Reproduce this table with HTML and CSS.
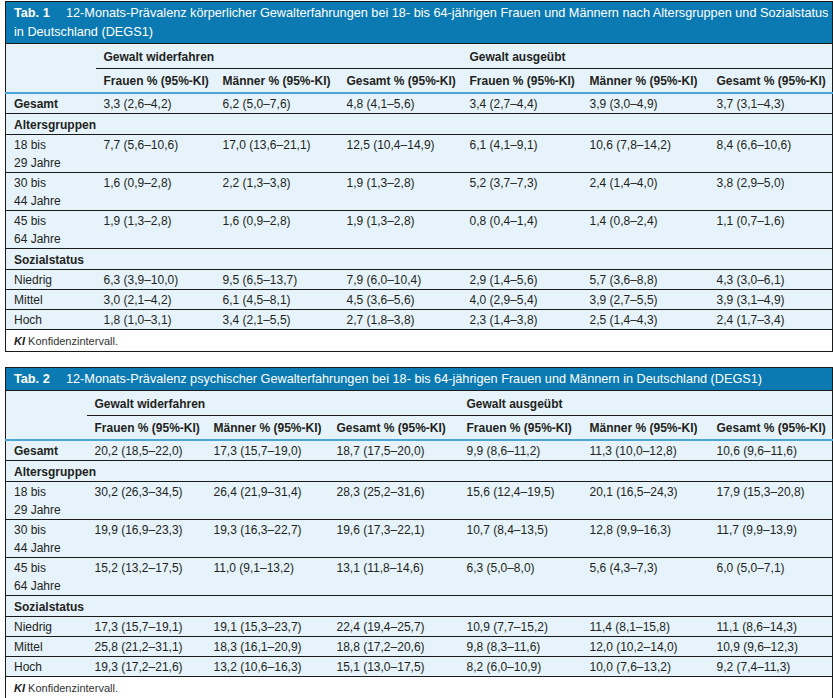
FILE: index.html
```html
<!DOCTYPE html>
<html lang="de">
<head>
<meta charset="utf-8">
<link rel="stylesheet" href="styles.css">
<title>DEGS1 Tabellen</title>
</head>
<body>
<div class="page">
  <table class="tab t1">
    <colgroup>
      <col class="c1"><col class="c2"><col class="c3"><col class="c4"><col class="c5"><col class="c6"><col class="c7">
    </colgroup>
    <thead>
      <tr>
        <th class="title" colspan="7"><span class="tabno">Tab. 1</span>12-Monats-Prävalenz körperlicher Gewalterfahrungen bei 18- bis 64-jährigen Frauen und Männern nach Altersgruppen und Sozialstatus<br>in Deutschland (DEGS1)</th>
      </tr>
      <tr class="grp">
        <th class="stub" rowspan="2"></th>
        <th colspan="3">Gewalt widerfahren</th>
        <th colspan="3">Gewalt ausgeübt</th>
      </tr>
      <tr class="cols">
        <th>Frauen % (95%-KI)</th><th>Männer % (95%-KI)</th><th>Gesamt % (95%-KI)</th>
        <th>Frauen % (95%-KI)</th><th>Männer % (95%-KI)</th><th>Gesamt % (95%-KI)</th>
      </tr>
    </thead>
    <tbody>
      <tr><th class="lbl">Gesamt</th><td>3,3 (2,6–4,2)</td><td>6,2 (5,0–7,6)</td><td>4,8 (4,1–5,6)</td><td>3,4 (2,7–4,4)</td><td>3,9 (3,0–4,9)</td><td>3,7 (3,1–4,3)</td></tr>
      <tr class="sec"><th class="lbl" colspan="7">Altersgruppen</th></tr>
      <tr><td class="rl">18 bis<br>29 Jahre</td><td>7,7 (5,6–10,6)</td><td>17,0 (13,6–21,1)</td><td>12,5 (10,4–14,9)</td><td>6,1 (4,1–9,1)</td><td>10,6 (7,8–14,2)</td><td>8,4 (6,6–10,6)</td></tr>
      <tr><td class="rl">30 bis<br>44 Jahre</td><td>1,6 (0,9–2,8)</td><td>2,2 (1,3–3,8)</td><td>1,9 (1,3–2,8)</td><td>5,2 (3,7–7,3)</td><td>2,4 (1,4–4,0)</td><td>3,8 (2,9–5,0)</td></tr>
      <tr><td class="rl">45 bis<br>64 Jahre</td><td>1,9 (1,3–2,8)</td><td>1,6 (0,9–2,8)</td><td>1,9 (1,3–2,8)</td><td>0,8 (0,4–1,4)</td><td>1,4 (0,8–2,4)</td><td>1,1 (0,7–1,6)</td></tr>
      <tr class="sec"><th class="lbl" colspan="7">Sozialstatus</th></tr>
      <tr><td class="rl">Niedrig</td><td>6,3 (3,9–10,0)</td><td>9,5 (6,5–13,7)</td><td>7,9 (6,0–10,4)</td><td>2,9 (1,4–5,6)</td><td>5,7 (3,6–8,8)</td><td>4,3 (3,0–6,1)</td></tr>
      <tr><td class="rl">Mittel</td><td>3,0 (2,1–4,2)</td><td>6,1 (4,5–8,1)</td><td>4,5 (3,6–5,6)</td><td>4,0 (2,9–5,4)</td><td>3,9 (2,7–5,5)</td><td>3,9 (3,1–4,9)</td></tr>
      <tr><td class="rl">Hoch</td><td>1,8 (1,0–3,1)</td><td>3,4 (2,1–5,5)</td><td>2,7 (1,8–3,8)</td><td>2,3 (1,4–3,8)</td><td>2,5 (1,4–4,3)</td><td>2,4 (1,7–3,4)</td></tr>
    </tbody>
    <tfoot>
      <tr><td class="note" colspan="7"><b><i>KI</i></b> Konfidenzintervall.</td></tr>
    </tfoot>
  </table>

  <table class="tab t2">
    <colgroup>
      <col class="c1"><col class="c2"><col class="c3"><col class="c4"><col class="c5"><col class="c6"><col class="c7">
    </colgroup>
    <thead>
      <tr>
        <th class="title" colspan="7"><span class="tabno">Tab. 2</span>12-Monats-Prävalenz psychischer Gewalterfahrungen bei 18- bis 64-jährigen Frauen und Männern in Deutschland (DEGS1)</th>
      </tr>
      <tr class="grp">
        <th class="stub" rowspan="2"></th>
        <th colspan="3">Gewalt widerfahren</th>
        <th colspan="3">Gewalt ausgeübt</th>
      </tr>
      <tr class="cols">
        <th>Frauen % (95%-KI)</th><th>Männer % (95%-KI)</th><th>Gesamt % (95%-KI)</th>
        <th>Frauen % (95%-KI)</th><th>Männer % (95%-KI)</th><th>Gesamt % (95%-KI)</th>
      </tr>
    </thead>
    <tbody>
      <tr><th class="lbl">Gesamt</th><td>20,2 (18,5–22,0)</td><td>17,3 (15,7–19,0)</td><td>18,7 (17,5–20,0)</td><td>9,9 (8,6–11,2)</td><td>11,3 (10,0–12,8)</td><td>10,6 (9,6–11,6)</td></tr>
      <tr class="sec"><th class="lbl" colspan="7">Altersgruppen</th></tr>
      <tr><td class="rl">18 bis<br>29 Jahre</td><td>30,2 (26,3–34,5)</td><td>26,4 (21,9–31,4)</td><td>28,3 (25,2–31,6)</td><td>15,6 (12,4–19,5)</td><td>20,1 (16,5–24,3)</td><td>17,9 (15,3–20,8)</td></tr>
      <tr><td class="rl">30 bis<br>44 Jahre</td><td>19,9 (16,9–23,3)</td><td>19,3 (16,3–22,7)</td><td>19,6 (17,3–22,1)</td><td>10,7 (8,4–13,5)</td><td>12,8 (9,9–16,3)</td><td>11,7 (9,9–13,9)</td></tr>
      <tr><td class="rl">45 bis<br>64 Jahre</td><td>15,2 (13,2–17,5)</td><td>11,0 (9,1–13,2)</td><td>13,1 (11,8–14,6)</td><td>6,3 (5,0–8,0)</td><td>5,6 (4,3–7,3)</td><td>6,0 (5,0–7,1)</td></tr>
      <tr class="sec"><th class="lbl" colspan="7">Sozialstatus</th></tr>
      <tr><td class="rl">Niedrig</td><td>17,3 (15,7–19,1)</td><td>19,1 (15,3–23,7)</td><td>22,4 (19,4–25,7)</td><td>10,9 (7,7–15,2)</td><td>11,4 (8,1–15,8)</td><td>11,1 (8,6–14,3)</td></tr>
      <tr><td class="rl">Mittel</td><td>25,8 (21,2–31,1)</td><td>18,3 (16,1–20,9)</td><td>18,8 (17,2–20,6)</td><td>9,8 (8,3–11,6)</td><td>12,0 (10,2–14,0)</td><td>10,9 (9,6–12,3)</td></tr>
      <tr><td class="rl">Hoch</td><td>19,3 (17,2–21,6)</td><td>13,2 (10,6–16,3)</td><td>15,1 (13,0–17,5)</td><td>8,2 (6,0–10,9)</td><td>10,0 (7,6–13,2)</td><td>9,2 (7,4–11,3)</td></tr>
    </tbody>
    <tfoot>
      <tr><td class="note" colspan="7"><b><i>KI</i></b> Konfidenzintervall.</td></tr>
    </tfoot>
  </table>
</div>
</body>
</html>
```

FILE: styles.css
```css
html, body {
  margin: 0;
  padding: 0;
  background: #ffffff;
}

.page {
  padding: 1px 1px 0 5px;
  font-family: "Liberation Sans", Arial, sans-serif;
  color: #231f20;
}

.tab {
  width: 827px;
  table-layout: fixed;
  border-collapse: collapse;
  border: 1px solid #1a1a1a;
  background: #e6f3fb;
  font-size: 12px;
  line-height: 18px;
}

.t2 {
  margin-top: 15px;
}

.t1 .c1 { width: 90px; }
.t1 .c2 { width: 119px; }
.t1 .c3 { width: 124px; }
.t1 .c4 { width: 123px; }
.t1 .c5 { width: 120px; }
.t1 .c6 { width: 127px; }
.t1 .c7 { width: 124px; }

.t2 .c1 { width: 81px; }
.t2 .c2 { width: 119px; }
.t2 .c3 { width: 123px; }
.t2 .c4 { width: 130px; }
.t2 .c5 { width: 123px; }
.t2 .c6 { width: 127px; }
.t2 .c7 { width: 124px; }

.tab th,
.tab td {
  padding: 1px 4px 0 8px;
  text-align: left;
  vertical-align: top;
  white-space: nowrap;
  border-bottom: 1px solid #1a1a1a;
}

.tab th {
  font-weight: 700;
}

.tab td {
  font-weight: 400;
}

.tab .title {
  background: #0b7ab3;
  color: #ffffff;
  font-weight: 400;
  font-size: 12.7px;
  line-height: 19px;
  height: 19px;
  padding: 2px 4px 1px 8px;
}

.tabno {
  display: inline-block;
  vertical-align: top;
  width: 52px;
  font-weight: 700;
  font-size: 12.7px;
  line-height: 19px;
}

.grp th {
  padding-top: 4px;
  padding-bottom: 2px;
}

.grp .stub {
  border-bottom: 2px solid #4aa6d6;
}

.cols th {
  padding-top: 3px;
  padding-bottom: 2px;
  border-bottom: 2px solid #4aa6d6;
}

.sec .lbl {
  padding-top: 2px;
}

.tab .note {
  background: #ffffff;
  font-size: 11px;
  line-height: 18px;
  padding: 2px 4px 1px 8px;
  color: #333333;
  border-bottom: none;
}

.note b {
  color: #1a1a1a;
}
```
